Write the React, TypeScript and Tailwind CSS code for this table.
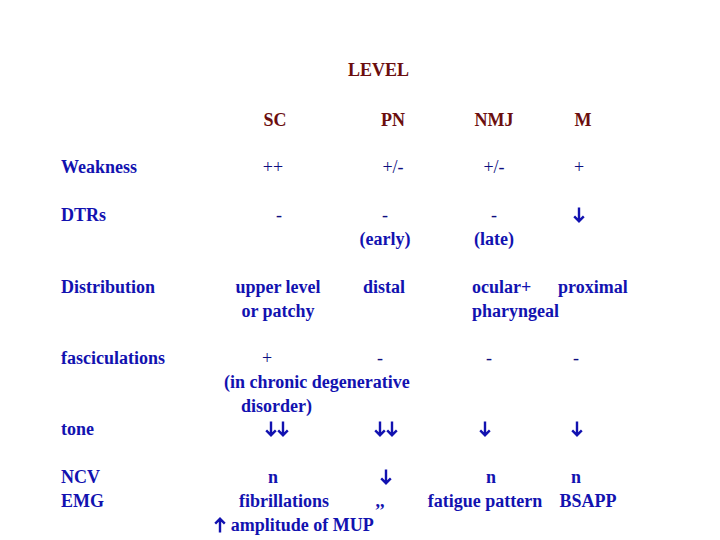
const serif = "font-['Liberation_Serif','Times_New_Roman','DejaVu_Serif',serif]";

const cols = "grid grid-cols-[159px_114px_102px_110px_66px] pl-[61px]";

function Label({ children }: { children: React.ReactNode }) {
  return <div className="flex flex-col font-bold text-[#1212b0]">{children}</div>;
}

function Cell({ children, className = "" }: { children: React.ReactNode; className?: string }) {
  return <div className={"flex flex-col items-center whitespace-nowrap " + className}>{children}</div>;
}

function Sym({ children }: { children: React.ReactNode }) {
  return <span className="font-normal text-[#0e0e80]">{children}</span>;
}

function Bold({ children }: { children: React.ReactNode }) {
  return <span className="font-bold text-[#1212b0]">{children}</span>;
}

// symbol-font arrow, drawn because the installed fonts give a tiny glyph
function Arrow({ up = false }: { up?: boolean }) {
  return (
    <svg
      width="12"
      height="16"
      viewBox="0 0 12 16"
      className={"inline-block align-[-2px] text-[#1212b0] " + (up ? "rotate-180" : "")}
      fill="none"
      stroke="currentColor"
      strokeWidth="2.4"
    >
      <path d="M6 0.5V14.2M1.2 9.4L6 14.2L10.8 9.4" />
    </svg>
  );
}

export default function App() {
  return (
    <div className={"w-[720px] h-[540px] bg-white overflow-hidden text-[18px] leading-[24px] " + serif}>
      <div className="mt-[58px] flex justify-center pl-[37px] font-bold text-[#6b0e0e]">LEVEL</div>

      {/* column headers */}
      <div className={cols + " mt-[26px] font-bold text-[#6b0e0e]"}>
        <div />
        <Cell className="pr-[4px]">SC</Cell>
        <Cell className="pl-[16px]">PN</Cell>
        <Cell className="pl-[6px]">NMJ</Cell>
        <Cell className="pl-[8px]">M</Cell>
      </div>

      {/* weakness */}
      <div className={cols + " mt-[23px]"}>
        <Label>Weakness</Label>
        <Cell className="pr-[8px]"><Sym>++</Sym></Cell>
        <Cell className="pl-[16px]"><Sym>+/-</Sym></Cell>
        <Cell className="pl-[6px]"><Sym>+/-</Sym></Cell>
        <Cell><Sym>+</Sym></Cell>
      </div>

      {/* DTRs */}
      <div className={cols + " mt-[24px]"}>
        <Label>DTRs</Label>
        <Cell className="pl-[4px]"><Sym>-</Sym></Cell>
        <Cell>
          <Sym>-</Sym>
          <Bold>(early)</Bold>
        </Cell>
        <Cell className="pl-[6px]">
          <Sym>-</Sym>
          <Bold>(late)</Bold>
        </Cell>
        <Cell><span><Arrow /></span></Cell>
      </div>

      {/* distribution */}
      <div className={cols + " mt-[24px] font-bold text-[#1212b0]"}>
        <Label>Distribution</Label>
        <Cell className="pl-[2px]">
          <span>upper level</span>
          <span>or patchy</span>
        </Cell>
        <div className="pl-[29px]">distal</div>
        <div className="flex flex-col pl-[36px] whitespace-nowrap">
          <span>ocular+</span>
          <span>pharyngeal</span>
        </div>
        <div className="pl-[12px] whitespace-nowrap">proximal</div>
      </div>

      {/* fasciculations */}
      <div className={cols + " mt-[23px]"}>
        <Label>fasciculations</Label>
        <Cell className="pr-[20px]"><Sym>+</Sym></Cell>
        <Cell className="pr-[10px]"><Sym>-</Sym></Cell>
        <Cell className="pr-[4px]"><Sym>-</Sym></Cell>
        <Cell className="pr-[6px]"><Sym>-</Sym></Cell>
        <div />
        <div className="col-span-2 flex flex-col pl-[4px] font-bold text-[#1212b0] whitespace-nowrap">
          <span>(in chronic degenerative</span>
          <span className="pl-[17px]">disorder)</span>
        </div>
      </div>

      {/* tone */}
      <div className={cols + " mt-[-1px]"}>
        <Label>tone</Label>
        <Cell><span><Arrow /><Arrow /></span></Cell>
        <Cell className="pl-[2px]"><span><Arrow /><Arrow /></span></Cell>
        <Cell className="pr-[12px]"><span><Arrow /></span></Cell>
        <Cell className="pr-[4px]"><span><Arrow /></span></Cell>
      </div>

      {/* NCV / EMG */}
      <div className={cols + " mt-[24px] font-bold text-[#1212b0]"}>
        <Label>
          <span>NCV</span>
          <span>EMG</span>
        </Label>
        <Cell>
          <span className="pr-[8px]">n</span>
          <span className="pl-[14px]">fibrillations</span>
          <span className="pl-[34px]">
            <Arrow up /> amplitude of MUP
          </span>
        </Cell>
        <Cell>
          <span className="pl-[2px]"><Arrow /></span>
          <span className="pr-[10px]">,,</span>
        </Cell>
        <Cell>
          <span>n</span>
          <span className="pr-[12px]">fatigue pattern</span>
        </Cell>
        <Cell>
          <span className="pr-[6px]">n</span>
          <span className="pl-[18px]">BSAPP</span>
        </Cell>
      </div>
    </div>
  );
}
